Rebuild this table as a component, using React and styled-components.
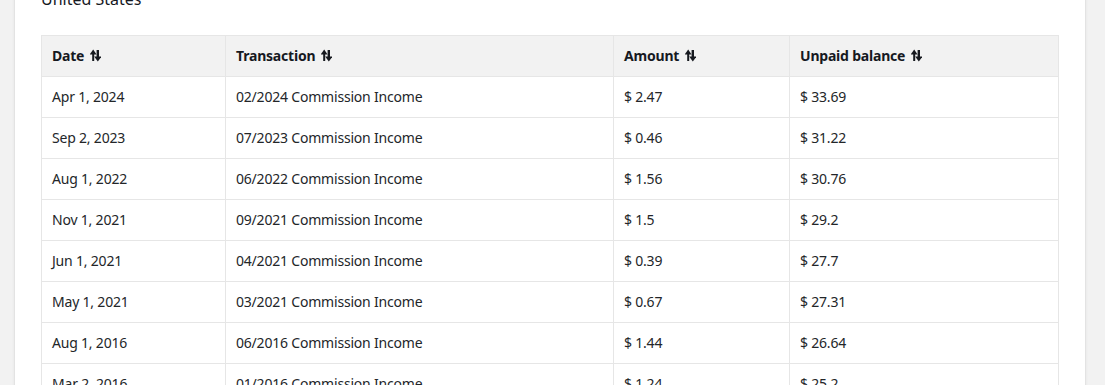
import styled, { createGlobalStyle } from "styled-components";

const GlobalStyle = createGlobalStyle`
  html, body {
    margin: 0;
    padding: 0;
    background: #f2f2f2;
    font-family: "Noto Sans", "Open Sans", Arial, sans-serif;
    color: #16191f;
    overflow: hidden;
  }
`;

const rows = [
  ["Apr 1, 2024", "02/2024 Commission Income", "$ 2.47", "$ 33.69"],
  ["Sep 2, 2023", "07/2023 Commission Income", "$ 0.46", "$ 31.22"],
  ["Aug 1, 2022", "06/2022 Commission Income", "$ 1.56", "$ 30.76"],
  ["Nov 1, 2021", "09/2021 Commission Income", "$ 1.5", "$ 29.2"],
  ["Jun 1, 2021", "04/2021 Commission Income", "$ 0.39", "$ 27.7"],
  ["May 1, 2021", "03/2021 Commission Income", "$ 0.67", "$ 27.31"],
  ["Aug 1, 2016", "06/2016 Commission Income", "$ 1.44", "$ 26.64"],
  ["Mar 2, 2016", "01/2016 Commission Income", "$ 1.24", "$ 25.2"],
];

const columns = [
  { label: "Date", width: 184 },
  { label: "Transaction", width: 388 },
  { label: "Amount", width: 176 },
  { label: "Unpaid balance", width: 269 },
];

// up arrow (thin) on the left, down arrow (heavier) on the right
const SortIcon = () => (
  <svg width="11" height="13" viewBox="0 0 11 13" fill="#16191f">
    <rect x="2.2" y="3" width="2" height="9" />
    <polygon points="-0.2,5.4 3.2,0.6 6.6,5.4" />
    <rect x="6.6" y="1" width="2.4" height="8" />
    <polygon points="4.2,7.6 7.8,12.6 11.4,7.6" />
  </svg>
);

const App = () => (
  <Page>
    <GlobalStyle />
    <Card>
      <Title>United States</Title>
      <Table>
        <colgroup>
          {columns.map((c) => (
            <col key={c.label} style={{ width: c.width }} />
          ))}
        </colgroup>
        <thead>
          <tr>
            {columns.map((c) => (
              <Th key={c.label}>
                <HeadLabel>
                  {c.label}
                  <SortIcon />
                </HeadLabel>
              </Th>
            ))}
          </tr>
        </thead>
        <tbody>
          {rows.map((r) => (
            <tr key={r[0]}>
              {r.map((cell, i) => (
                <Td key={i}>{cell}</Td>
              ))}
            </tr>
          ))}
        </tbody>
      </Table>
    </Card>
  </Page>
);

const Page = styled.div`
  padding-left: 14px;
  margin-top: -13px;
  height: 420px;
`;

const Card = styled.div`
  width: 1072px;
  background: #fff;
  border-left: 1px solid #e3e3e3;
  border-right: 1px solid #e3e3e3;
  padding: 0 26px 40px 26px;
  box-sizing: border-box;
  box-shadow: 0 1px 3px rgba(0, 0, 0, 0.06);
`;

const Title = styled.h2`
  margin: 0;
  font-size: 16px;
  font-weight: 400;
  line-height: 24px;
  color: #16191f;
  padding-bottom: 24px;
`;

const Table = styled.table`
  width: 1017px;
  border-collapse: collapse;
  table-layout: fixed;
  border: 1px solid #e6e6e6;
`;

const Th = styled.th`
  background: #f2f2f2;
  height: 41px;
  padding: 0 10px 2px;
  text-align: left;
  font-size: 14px;
  font-weight: 700;
  letter-spacing: -0.2px;
  border: 1px solid #e6e6e6;
  box-sizing: border-box;
`;

const HeadLabel = styled.span`
  display: inline-flex;
  align-items: center;
  gap: 6px;
`;

const Td = styled.td`
  height: 41px;
  padding: 0 10px 2px;
  font-size: 14px;
  letter-spacing: -0.2px;
  color: #232629;
  border: 1px solid #e6e6e6;
  box-sizing: border-box;
  white-space: nowrap;
`;

export default App;
